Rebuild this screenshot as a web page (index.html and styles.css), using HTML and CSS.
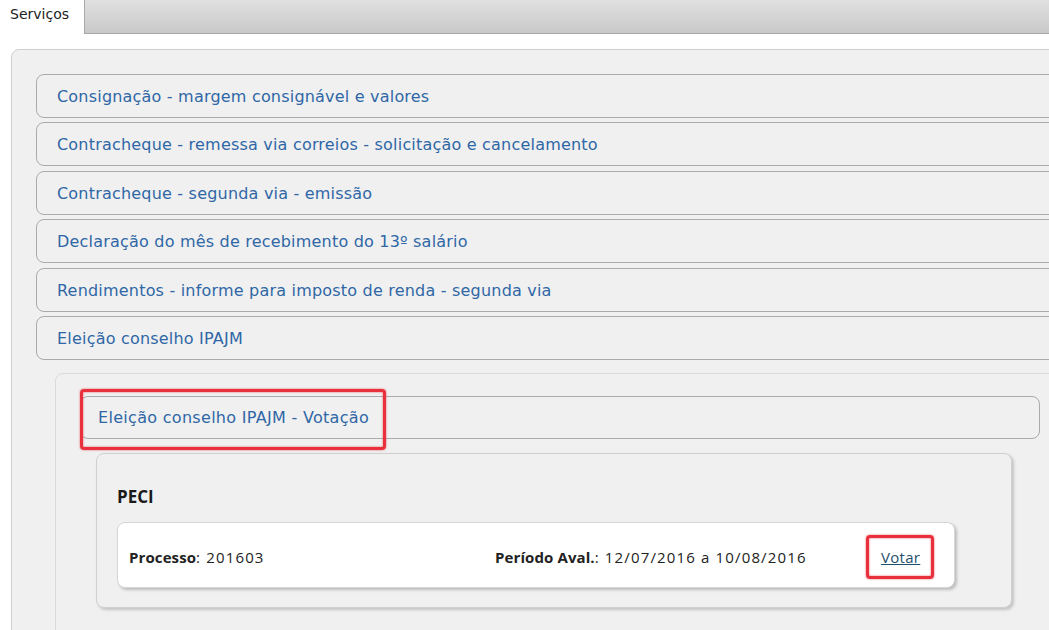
FILE: index.html
```html
<!DOCTYPE html>
<html lang="pt-BR">
<head>
    <meta charset="UTF-8">
    <title>Serviços</title>
    <link rel="stylesheet" href="styles.css">
</head>
<body>
    <div class="tabs">
        <div class="tab active">Serviços</div>
        <div class="tab-fill"></div>
    </div>

    <div class="services">
        <div class="acc-header">Consignação - margem consignável e valores</div>
        <div class="acc-header">Contracheque - remessa via correios - solicitação e cancelamento</div>
        <div class="acc-header">Contracheque - segunda via - emissão</div>
        <div class="acc-header">Declaração do mês de recebimento do 13º salário</div>
        <div class="acc-header">Rendimentos - informe para imposto de renda - segunda via</div>
        <div class="acc-header">Eleição conselho IPAJM</div>

        <div class="acc-panel">
            <div class="acc-header sub">
                Eleição conselho IPAJM - Votação
                <span class="mark mark-header"></span>
            </div>

            <div class="election">
                <h3 class="election-title">PECI</h3>
                <div class="election-row">
                    <div><b>Processo</b>: 201603</div>
                    <div><b>Período Aval.</b>: 12/07/2016 a 10/08/2016</div>
                    <div><a href="#" class="vote-link">Votar</a></div>
                    <span class="mark mark-vote"></span>
                </div>
            </div>
        </div>
    </div>
</body>
</html>
```

FILE: styles.css
```css
* {
    margin: 0;
    padding: 0;
    box-sizing: border-box;
}
body {
    background: #ffffff;
    font-family: 'DejaVu Sans', Verdana, sans-serif;
    color: #222;
    overflow: hidden;
    height: 630px;
}

/* tab strip */
.tabs {
    display: flex;
    height: 34px;
}
.tab {
    width: 85px;
    padding: 6px 0 0 10px;
    font-size: 14px;
    color: #222;
    background: #fff;
    border-right: 1px solid #a9a9a9;
}
.tab-fill {
    flex: 1;
    background: linear-gradient(#e0e0e0, #c9c9c9);
    border-bottom: 1px solid #a6a6a6;
}

/* accordion */
.services {
    width: 1098px;
    margin: 15px 0 0 11px;
    padding: 24px;
    background: #f0f0f0;
    border: 1px solid #cfcfcf;
    border-radius: 8px 0 0 0;
    min-height: 700px;
}
.acc-header {
    position: relative;
    height: 44px;
    margin-bottom: 4.4px;
    padding: 1px 0 0 20px;
    display: flex;
    align-items: center;
    font-size: 16px;
    letter-spacing: 0.2px;
    color: #2f67a6;
    background: #f0f0f0;
    border: 1px solid #aaa;
    border-radius: 8px;
}
.acc-header.sub {
    height: 43px;
    padding-left: 17px;
    margin: 0;
    letter-spacing: 0.3px;
}
.acc-panel {
    margin: 12.6px 19px 0;
    padding: 22px 24px 40px;
    border: 1px solid #dadada;
    border-radius: 8px 8px 0 0;
    min-height: 300px;
}

/* election card */
.election {
    margin: 14px 28px 0 16px;
    padding: 31px 56px 19px 20px;
    background: #f0f0f0;
    border: 1px solid #d0d0d0;
    border-radius: 8px;
    box-shadow: 2px 2px 3px #c4c4c4;
}
.election-title {
    font-family: 'Open Sans', sans-serif;
    font-size: 17px;
    font-weight: 700;
    line-height: 24px;
    color: #1a1a1a;
    margin-bottom: 13px;
}
.election-row {
    position: relative;
    height: 66px;
    display: grid;
    grid-template-columns: 366px 386px auto;
    align-items: center;
    padding: 4px 0 0 11px;
    font-family: 'Open Sans', sans-serif;
    font-size: 15px;
    letter-spacing: 1.15px;
    color: #222;
    background: #fff;
    border: 1px solid #d6d6d6;
    border-radius: 8px;
    box-shadow: 2px 2px 3px #bdbdbd;
}
.election-row b {
    font-weight: 700;
    letter-spacing: 0.1px;
}
.vote-link {
    color: #1f4f6b;
    letter-spacing: 0.3px;
}

/* red highlight marks */
.mark {
    position: absolute;
    border: 3px solid #e8313c;
    border-radius: 4px;
    box-shadow: 0 0 2px rgba(232, 40, 50, 0.8), inset 0 0 2px rgba(232, 40, 50, 0.8);
    pointer-events: none;
}
.mark-header {
    left: -1px;
    top: -8px;
    width: 306px;
    height: 61px;
}
.mark-vote {
    left: 748px;
    top: 12px;
    width: 68px;
    height: 44px;
}
```
